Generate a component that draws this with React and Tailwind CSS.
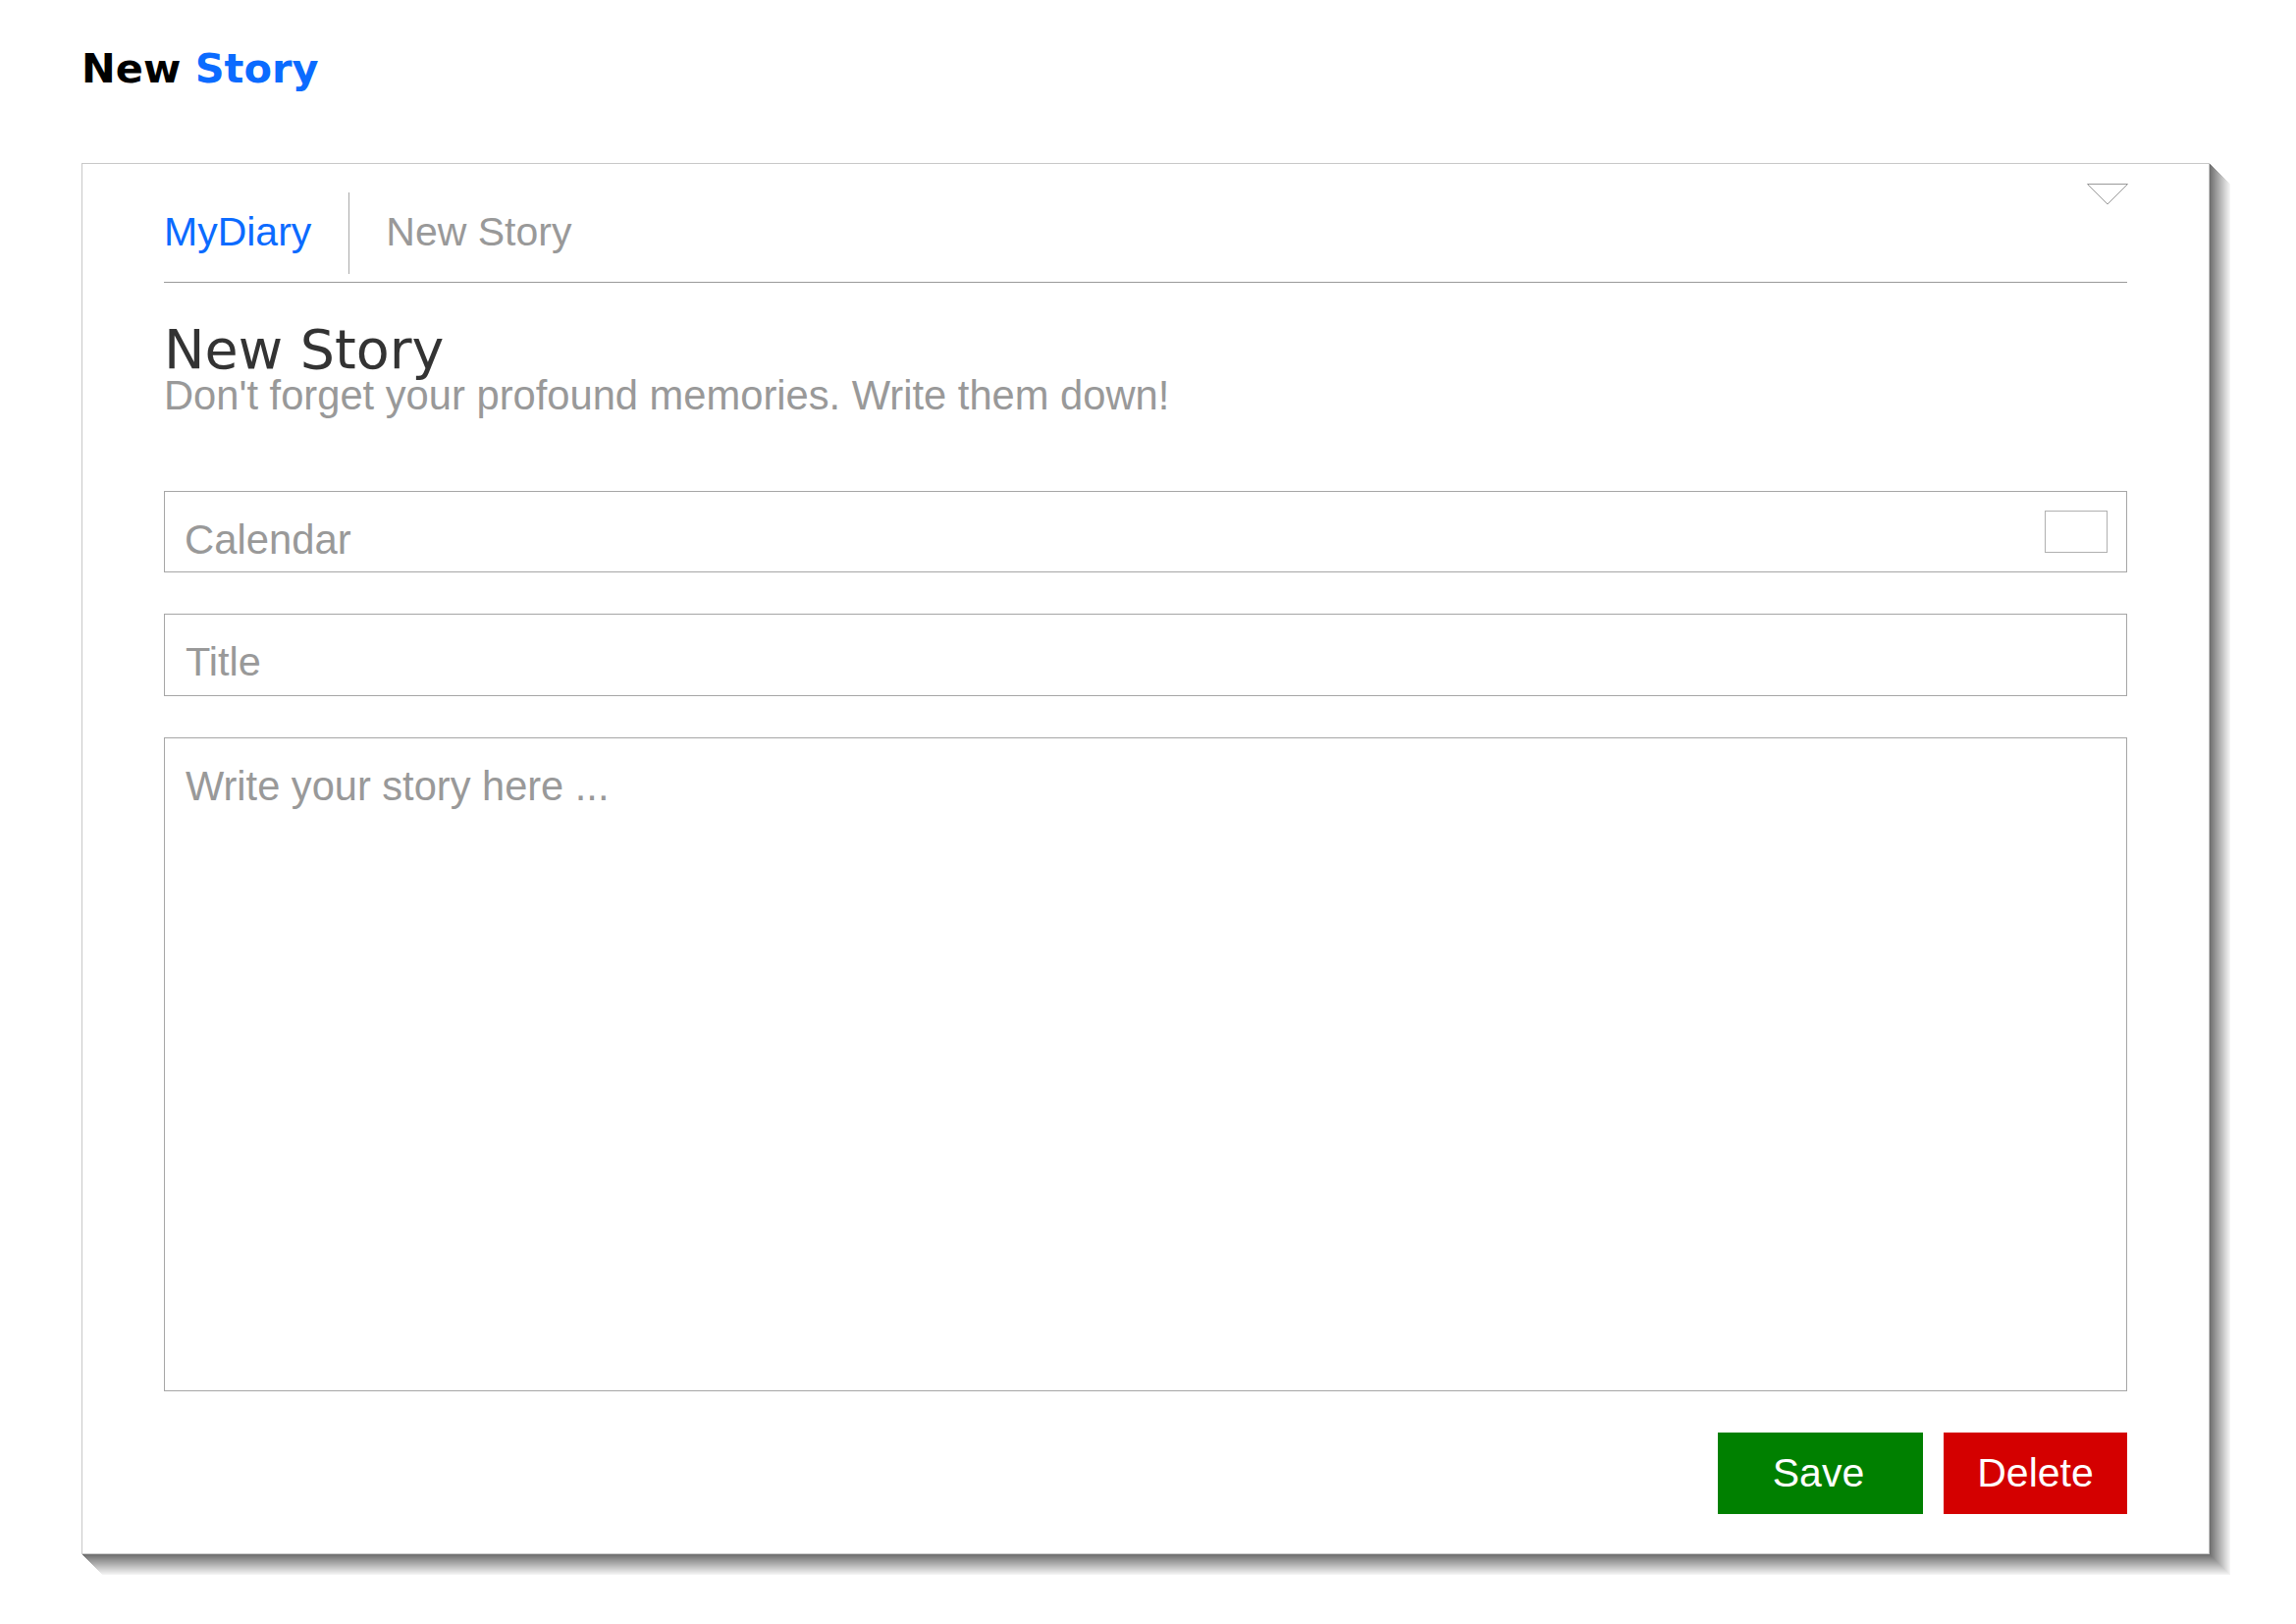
import { useState } from 'react';

const SANS = "font-['Liberation_Sans',Arial,sans-serif]";
const DEJAVU = "font-['DejaVu_Sans',sans-serif]";

export default function App() {
  const [date, setDate] = useState('');
  const [title, setTitle] = useState('');
  const [story, setStory] = useState('');

  return (
    <div className="min-h-[1654px] w-full bg-white px-[83px] pt-[49px]">
      <h1 className={`${DEJAVU} text-[41.5px] leading-[41px] font-bold text-black`}>
        New <span className="text-[#0b6bff]">Story</span>
      </h1>

      {/* card with stepped diagonal shadow */}
      <div className="relative mt-[76px] w-[2168px] border border-[#c8c8c8] bg-white px-[83px] pt-[29px] pb-[40px] shadow-[1px_1px_0_#707070,2px_2px_0_#777777,3px_3px_0_#7d7d7d,4px_4px_0_#848484,5px_5px_0_#8a8a8a,6px_6px_0_#919191,7px_7px_0_#989898,8px_8px_0_#9e9e9e,9px_9px_0_#a5a5a5,10px_10px_0_#ababab,11px_11px_0_#b2b2b2,12px_12px_0_#b9b9b9,13px_13px_0_#bfbfbf,14px_14px_0_#c6c6c6,15px_15px_0_#cccccc,16px_16px_0_#d3d3d3,17px_17px_0_#dadada,18px_18px_0_#e0e0e0,19px_19px_0_#e7e7e7,20px_20px_0_#ededed,21px_21px_0_#f4f4f4]">
        <svg className="absolute right-[82px] top-[20px]" width="42" height="22" viewBox="0 0 42 22">
          <polygon points="0.5,0.5 41.5,0.5 21,21" fill="white" stroke="#9a9a9a" strokeWidth="1" />
        </svg>

        <nav className={`${SANS} flex h-[83px] text-[41px] leading-none`}>
          <a className="flex h-full items-center border-r border-[#aaaaaa] pr-[38px] pb-[3px] text-[#0b6bff]">MyDiary</a>
          <span className="flex h-full items-center pl-[37px] pb-[3px] text-[#999999]">New Story</span>
        </nav>
        <div className="mt-[8px] h-px bg-[#999999]" />

        <div className="mt-[40px]">
          <h2 className={`${DEJAVU} text-[55.5px] leading-[55px] font-normal text-[#333333]`}>New Story</h2>
          <p className={`${SANS} text-[41.7px] leading-[40px] text-[#999999]`}>
            Don't forget your profound memories. Write them down!
          </p>
        </div>

        <div className="mt-[77px] flex h-[83px] border border-[#a6a6a6] pl-[20px] pr-[19px]">
          <input
            value={date}
            onChange={(e) => setDate(e.target.value)}
            placeholder="Calendar"
            className={`${SANS} h-full min-w-0 flex-1 bg-transparent pt-[28px] pb-[12px] text-[41.8px] leading-[41px] text-[#555] outline-none placeholder:text-[#999999]`}
          />
          <div className="mt-[19px] h-[43px] w-[64px] border border-[#b0b0b0]" />
        </div>

        <input
          value={title}
          onChange={(e) => setTitle(e.target.value)}
          placeholder="Title"
          className={`${SANS} mt-[42px] block h-[84px] w-full border border-[#a6a6a6] pl-[21px] pt-[27px] pb-[14px] text-[41.5px] leading-[41px] text-[#555] outline-none placeholder:text-[#999999]`}
        />

        <textarea
          value={story}
          onChange={(e) => setStory(e.target.value)}
          placeholder="Write your story here ..."
          className={`${SANS} mt-[42px] block h-[666px] w-full resize-none border border-[#a6a6a6] pl-[21px] pt-[28px] text-[41.6px] leading-[41px] text-[#555] outline-none placeholder:text-[#999999]`}
        />

        <div className="mt-[42px] flex justify-end gap-[21px]">
          <button className={`${SANS} flex h-[83px] w-[209px] items-center justify-center bg-[#008000] pr-[4px] text-[41px] leading-none text-white`}>
            Save
          </button>
          <button className={`${SANS} flex h-[83px] w-[187px] items-center justify-center bg-[#d40000] text-[41px] leading-none text-white`}>
            Delete
          </button>
        </div>
      </div>
    </div>
  );
}
